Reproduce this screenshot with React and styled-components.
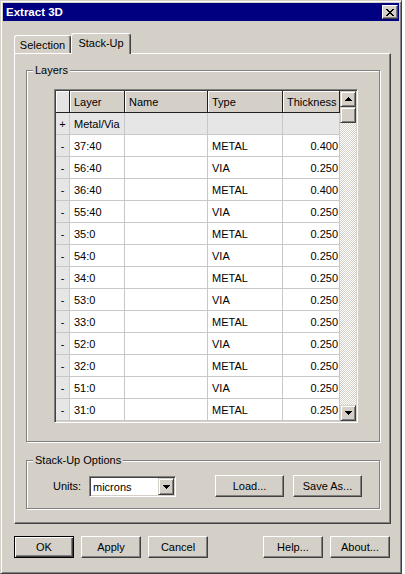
import styled, { createGlobalStyle } from "styled-components";

const GlobalStyle = createGlobalStyle`
  html, body {
    margin: 0;
    padding: 0;
    background: #fff;
  }
  body {
    font-family: "Liberation Sans", Arial, sans-serif;
    font-size: 11px;
    color: #000;
  }
  * {
    box-sizing: border-box;
  }
`;

const rows = [
  ["37:40", "METAL", "0.400"],
  ["56:40", "VIA", "0.250"],
  ["36:40", "METAL", "0.400"],
  ["55:40", "VIA", "0.250"],
  ["35:0", "METAL", "0.250"],
  ["54:0", "VIA", "0.250"],
  ["34:0", "METAL", "0.250"],
  ["53:0", "VIA", "0.250"],
  ["33:0", "METAL", "0.250"],
  ["52:0", "VIA", "0.250"],
  ["32:0", "METAL", "0.250"],
  ["51:0", "VIA", "0.250"],
  ["31:0", "METAL", "0.250"],
];

// classic 7x4 pixel arrow
function Arrow({ dir }) {
  const lines = [
    [3, 1],
    [2, 3],
    [1, 5],
    [0, 7],
  ];
  const ordered = dir === "up" ? lines : [...lines].reverse();
  return (
    <svg width="7" height="4" viewBox="0 0 7 4" shapeRendering="crispEdges">
      {ordered.map(([x, w], y) => (
        <rect key={y} x={x} y={y} width={w} height="1" fill="#000" />
      ))}
    </svg>
  );
}

function CloseGlyph() {
  const px = [
    [0, 1, 6, 7],
    [1, 2, 5, 6],
    [2, 3, 4, 5],
    [3, 4],
    [2, 3, 4, 5],
    [1, 2, 5, 6],
    [0, 1, 6, 7],
  ];
  return (
    <svg width="8" height="7" viewBox="0 0 8 7" shapeRendering="crispEdges">
      {px.map((xs, y) =>
        xs.map((x) => <rect key={y + "-" + x} x={x} y={y} width="1" height="1" fill="#000" />)
      )}
    </svg>
  );
}

export default function App() {
  return (
    <>
      <GlobalStyle />
      <Window>
        <TitleBar>
          <Title>Extract 3D</Title>
          <CloseButton>
            <CloseGlyph />
          </CloseButton>
        </TitleBar>
        <Body>
          <Tabs>
            <Tab $width={57}>Selection</Tab>
            <Tab $width={60} $active>
              Stack-Up
            </Tab>
          </Tabs>
          <Panel>
            <GroupBox $height={372} $pad="18px 0 0 27px">
              <Legend>Layers</Legend>
              <GridFrame>
                <Table>
                  <HeadCell $corner />
                  <HeadCell>Layer</HeadCell>
                  <HeadCell>Name</HeadCell>
                  <HeadCell>Type</HeadCell>
                  <HeadCell>Thickness</HeadCell>

                  <Cell $shade $align="center">+</Cell>
                  <Cell $shade>Metal/Via</Cell>
                  <Cell $shade />
                  <Cell $shade />
                  <Cell $shade />

                  {rows.map(([layer, type, thick]) => (
                    <Row key={layer}>
                      <Cell $shade $align="center">-</Cell>
                      <Cell>{layer}</Cell>
                      <Cell />
                      <Cell>{type}</Cell>
                      <Cell $align="right">{thick}</Cell>
                    </Row>
                  ))}
                </Table>
                <ScrollBar>
                  <ScrollButton>
                    <Arrow dir="up" />
                  </ScrollButton>
                  <ScrollButton />
                  <Track />
                  <ScrollButton>
                    <Arrow dir="down" />
                  </ScrollButton>
                </ScrollBar>
              </GridFrame>
            </GroupBox>

            <GroupBox $height={49} $pad="3px 0 0 26px" $gap={18}>
              <Legend>Stack-Up Options</Legend>
              <OptionsRow>
                <FieldLabel>Units:</FieldLabel>
                <Combo>
                  <ComboText>microns</ComboText>
                  <ComboButton>
                    <Arrow dir="down" />
                  </ComboButton>
                </Combo>
                <Button $width={69} $ml={39}>
                  Load...
                </Button>
                <Button $width={69} $ml={9}>
                  Save As...
                </Button>
              </OptionsRow>
            </GroupBox>
          </Panel>

          <ButtonRow>
            <ButtonGroup>
              <Button $width={60} $default>
                OK
              </Button>
              <Button $width={60}>Apply</Button>
              <Button $width={60}>Cancel</Button>
            </ButtonGroup>
            <ButtonGroup>
              <Button $width={60}>Help...</Button>
              <Button $width={60}>About...</Button>
            </ButtonGroup>
          </ButtonRow>
        </Body>
      </Window>
    </>
  );
}

const Window = styled.div`
  width: 402px;
  height: 574px;
  background: #d4d0c8;
  border: 1px solid;
  border-color: #d4d0c8 #404040 #404040 #d4d0c8;
  box-shadow: inset 1px 1px #fff, inset -1px -1px #808080;
  padding: 2px;
  display: flex;
  flex-direction: column;
`;

const TitleBar = styled.div`
  height: 18px;
  background: #000080;
  display: flex;
  align-items: center;
  justify-content: space-between;
  padding: 0 1px 0 3px;
`;

const Title = styled.div`
  color: #fff;
  font-weight: bold;
  font-size: 11.5px;
  line-height: 18px;
`;

const CloseButton = styled.div`
  width: 16px;
  height: 14px;
  background: #d4d0c8;
  border: 1px solid;
  border-color: #fff #404040 #404040 #fff;
  box-shadow: inset -1px -1px #808080;
  display: flex;
  align-items: center;
  justify-content: center;
  padding-right: 1px;
`;

const Body = styled.div`
  flex: 1;
  padding: 12px 0 0 11px;
  display: flex;
  flex-direction: column;
`;

const Tabs = styled.div`
  display: flex;
  align-items: flex-end;
  height: 20px;
`;

const Tab = styled.div`
  position: relative;
  z-index: 1;
  width: ${(p) => p.$width}px;
  height: ${(p) => (p.$active ? 21 : 18)}px;
  margin-bottom: ${(p) => (p.$active ? -1 : 0)}px;
  background: #d4d0c8;
  border: 1px solid;
  border-bottom: none;
  border-color: #fff #404040 #404040 #fff;
  border-radius: 3px 3px 0 0;
  box-shadow: inset -1px 0 #808080;
  display: flex;
  align-items: ${(p) => (p.$active ? "flex-start" : "center")};
  padding-top: ${(p) => (p.$active ? 2 : 0)}px;
  justify-content: center;
  line-height: 14px;
`;

const Panel = styled.div`
  width: 377px;
  height: 471px;
  border: 1px solid;
  border-color: #fff #404040 #404040 #fff;
  box-shadow: inset -1px -1px #808080;
  padding: 16px 0 0 11px;
  display: flex;
  flex-direction: column;
`;

const GroupBox = styled.div`
  position: relative;
  width: 354px;
  height: ${(p) => p.$height}px;
  margin-top: ${(p) => p.$gap || 0}px;
  border: 1px solid #808080;
  box-shadow: inset 1px 1px #fff, 1px 1px #fff;
  padding: ${(p) => p.$pad};
`;

const Legend = styled.div`
  position: absolute;
  top: -7px;
  left: 6px;
  padding: 0 2px;
  background: #d4d0c8;
  line-height: 13px;
`;

const GridFrame = styled.div`
  width: 304px;
  height: 334px;
  display: flex;
  border: 1px solid;
  border-color: #808080 #fff #fff #808080;
  box-shadow: inset 1px 1px #404040, inset -1px -1px #d4d0c8;
  padding: 1px;
`;

const Table = styled.div`
  width: 284px;
  display: grid;
  grid-template-columns: 14px 55px 83px 75px 57px;
  grid-auto-rows: 22px;
  background: #fff;
  overflow: hidden;
`;

const Row = styled.div`
  display: contents;
`;

const HeadCell = styled.div`
  background: ${(p) => (p.$corner ? "#e4e4e4" : "#d4d0c8")};
  border-right: 1px solid #202020;
  border-bottom: 1px solid #202020;
  box-shadow: inset 1px 1px #fff;
  display: flex;
  align-items: center;
  padding-left: 4px;
  white-space: nowrap;
  overflow: hidden;
`;

const Cell = styled.div`
  background: ${(p) => (p.$shade ? "#e6e6e6" : "#fff")};
  border-right: 1px solid #c8c8c8;
  border-bottom: 1px solid #c8c8c8;
  display: flex;
  align-items: center;
  justify-content: ${(p) =>
    p.$align === "right" ? "flex-end" : p.$align === "center" ? "center" : "flex-start"};
  padding: ${(p) =>
    p.$align === "right" ? "0 1px 0 0" : p.$align === "center" ? "0" : "0 0 0 4px"};
  white-space: nowrap;
  overflow: hidden;
`;

const ScrollBar = styled.div`
  width: 16px;
  display: flex;
  flex-direction: column;
`;

const ScrollButton = styled.div`
  width: 16px;
  height: 16px;
  flex: none;
  background: #d4d0c8;
  border: 1px solid;
  border-color: #d4d0c8 #404040 #404040 #d4d0c8;
  box-shadow: inset 1px 1px #fff, inset -1px -1px #808080;
  display: flex;
  align-items: center;
  justify-content: center;
`;

const Track = styled.div`
  flex: 1;
  background: repeating-conic-gradient(#fff 0 25%, #d4d0c8 0 50%) 0 0 / 2px 2px;
`;

const OptionsRow = styled.div`
  display: flex;
  align-items: center;
  height: 44px;
`;

const FieldLabel = styled.div`
  width: 36px;
`;

const Combo = styled.div`
  width: 87px;
  height: 21px;
  background: #fff;
  border: 1px solid;
  border-color: #808080 #fff #fff #808080;
  box-shadow: inset 1px 1px #404040, inset -1px -1px #d4d0c8;
  padding: 1px;
  display: flex;
  align-items: stretch;
`;

const ComboText = styled.div`
  flex: 1;
  padding-left: 2px;
  padding-top: 3px;
`;

const ComboButton = styled(ScrollButton)`
  height: auto;
  padding-top: 1px;
`;

const Button = styled.div`
  width: ${(p) => p.$width}px;
  height: 22px;
  margin-left: ${(p) => p.$ml || 0}px;
  background: #d4d0c8;
  border: 1px solid;
  border-color: ${(p) => (p.$default ? "#000" : "#fff #404040 #404040 #fff")};
  box-shadow: ${(p) =>
    p.$default
      ? "inset 1px 1px #fff, inset -1px -1px #404040, inset -2px -2px #808080"
      : "inset -1px -1px #808080"};
  display: flex;
  align-items: center;
  justify-content: center;
  padding-bottom: 1px;
`;

const ButtonRow = styled.div`
  width: 376px;
  margin-top: 12px;
  display: flex;
  justify-content: space-between;
`;

const ButtonGroup = styled.div`
  display: flex;
  gap: 7px;
`;
